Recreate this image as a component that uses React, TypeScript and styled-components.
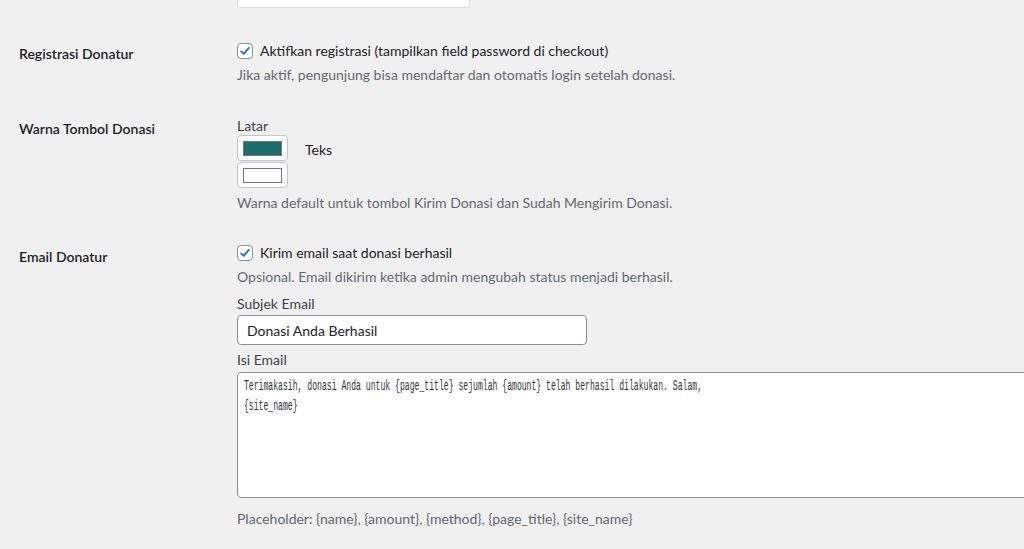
import styled, { createGlobalStyle } from "styled-components";

const GlobalStyle = createGlobalStyle`
  html, body {
    margin: 0;
    padding: 0;
    background: #f0f0f1;
  }
  body {
    font-family: Lato, "Liberation Sans", sans-serif;
    color: #1d2327;
    font-size: 14px;
  }
`;

const Page = styled.div`
  width: 1024px;
  height: 549px;
  overflow: hidden;
  padding-left: 19px;
  box-sizing: border-box;
`;

const Row = styled.div<{ $top: number }>`
  display: grid;
  grid-template-columns: 218px 1fr;
  padding-top: ${(p) => p.$top}px;
`;

const Label = styled.div<{ $offset: number }>`
  font-weight: 600;
  font-size: 14px;
  line-height: 20px;
  padding-top: ${(p) => p.$offset}px;
`;

const Field = styled.div`
  display: flex;
  flex-direction: column;
  align-items: flex-start;
  min-width: 0;
`;

const TopInput = styled.div`
  width: 231px;
  height: 7px;
  background: #fff;
  border: 1px solid #dcdcde;
  border-top: none;
  border-radius: 0 0 3px 3px;
  margin-left: 218px;
`;

const CheckLine = styled.label`
  display: flex;
  align-items: center;
  gap: 7px;
  font-size: 14px;
  line-height: 18px;
`;

const Box = styled.span`
  width: 16px;
  height: 16px;
  box-sizing: border-box;
  border: 1px solid #8c8f94;
  border-radius: 4px;
  background: #fff;
  display: flex;
  align-items: center;
  justify-content: center;
`;

const Description = styled.p<{ $mt?: number }>`
  margin: ${(p) => p.$mt ?? 6}px 0 0;
  font-size: 14px;
  line-height: 18px;
  color: #646970;
`;

const SmallLabel = styled.div<{ $mt?: number }>`
  margin-top: ${(p) => p.$mt ?? 0}px;
  font-size: 14px;
  line-height: 18px;
  color: #3c434a;
`;

const SwatchRow = styled.div`
  display: flex;
  align-items: flex-end;
  gap: 17px;
`;

const Swatch = styled.span`
  width: 51px;
  height: 26px;
  box-sizing: border-box;
  border: 1px solid #c3c4c7;
  border-radius: 4px;
  background: #fbfbfb;
  display: flex;
  align-items: center;
  justify-content: center;
  margin-bottom: 1px;
`;

const SwatchFill = styled.span<{ $color: string }>`
  width: 39px;
  height: 15px;
  box-sizing: border-box;
  border: 1px solid #767676;
  background: ${(p) => p.$color};
`;

const SwatchText = styled.span`
  font-size: 14px;
  line-height: 18px;
  padding-bottom: 3px;
`;

const TextInput = styled.div`
  margin-top: 2px;
  width: 350px;
  height: 30px;
  box-sizing: border-box;
  border: 1px solid #8c8f94;
  border-radius: 4px;
  background: #fff;
  padding: 0 9px;
  display: flex;
  align-items: center;
  font-size: 14px;
`;

const TextArea = styled.div`
  margin-top: 3px;
  width: 800px;
  height: 126px;
  box-sizing: border-box;
  border: 1px solid #8c8f94;
  border-radius: 4px;
  background: #fff;
  padding: 3px 6px;
  overflow: hidden;
`;

/* the reference's code font is very narrow, so squeeze a normal mono face */
const Code = styled.div`
  font-family: "Liberation Mono", monospace;
  font-size: 14px;
  line-height: 20px;
  white-space: pre;
  color: #2c3338;
  transform: scaleX(0.58);
  transform-origin: 0 0;
`;

function Check() {
  return (
    <Box>
      <svg width="14" height="14" viewBox="0 0 20 20">
        <path
          d="M4.5 10.5 L8.2 14 L15.5 5.5"
          fill="none"
          stroke="#2271b1"
          strokeWidth="2.6"
          strokeLinecap="round"
          strokeLinejoin="round"
        />
      </svg>
    </Box>
  );
}

export default function App() {
  return (
    <>
      <GlobalStyle />
      <Page>
        <TopInput />

        <Row $top={34}>
          <Label $offset={2}>Registrasi Donatur</Label>
          <Field>
            <CheckLine>
              <Check />
              Aktifkan registrasi (tampilkan field password di checkout)
            </CheckLine>
            <Description>
              Jika aktif, pengunjung bisa mendaftar dan otomatis login setelah donasi.
            </Description>
          </Field>
        </Row>

        <Row $top={33}>
          <Label $offset={2}>Warna Tombol Donasi</Label>
          <Field>
            <SmallLabel>Latar</SmallLabel>
            <SwatchRow>
              <Swatch>
                <SwatchFill $color="#1b6e6a" />
              </Swatch>
              <SwatchText>Teks</SwatchText>
            </SwatchRow>
            <Swatch>
              <SwatchFill $color="#ffffff" />
            </Swatch>
            <Description $mt={5}>
              Warna default untuk tombol Kirim Donasi dan Sudah Mengirim Donasi.
            </Description>
          </Field>
        </Row>

        <Row $top={32}>
          <Label $offset={3}>Email Donatur</Label>
          <Field>
            <CheckLine>
              <Check />
              Kirim email saat donasi berhasil
            </CheckLine>
            <Description>
              Opsional. Email dikirim ketika admin mengubah status menjadi berhasil.
            </Description>
            <SmallLabel $mt={9}>Subjek Email</SmallLabel>
            <TextInput>Donasi Anda Berhasil</TextInput>
            <SmallLabel $mt={6}>Isi Email</SmallLabel>
            <TextArea>
              <Code>
                {"Terimakasih, donasi Anda untuk {page_title} sejumlah {amount} telah berhasil dilakukan. Salam,\n{site_name}"}
              </Code>
            </TextArea>
            <Description $mt={12}>
              Placeholder: {"{name}"}, {"{amount}"}, {"{method}"}, {"{page_title}"}, {"{site_name}"}
            </Description>
          </Field>
        </Row>
      </Page>
    </>
  );
}
